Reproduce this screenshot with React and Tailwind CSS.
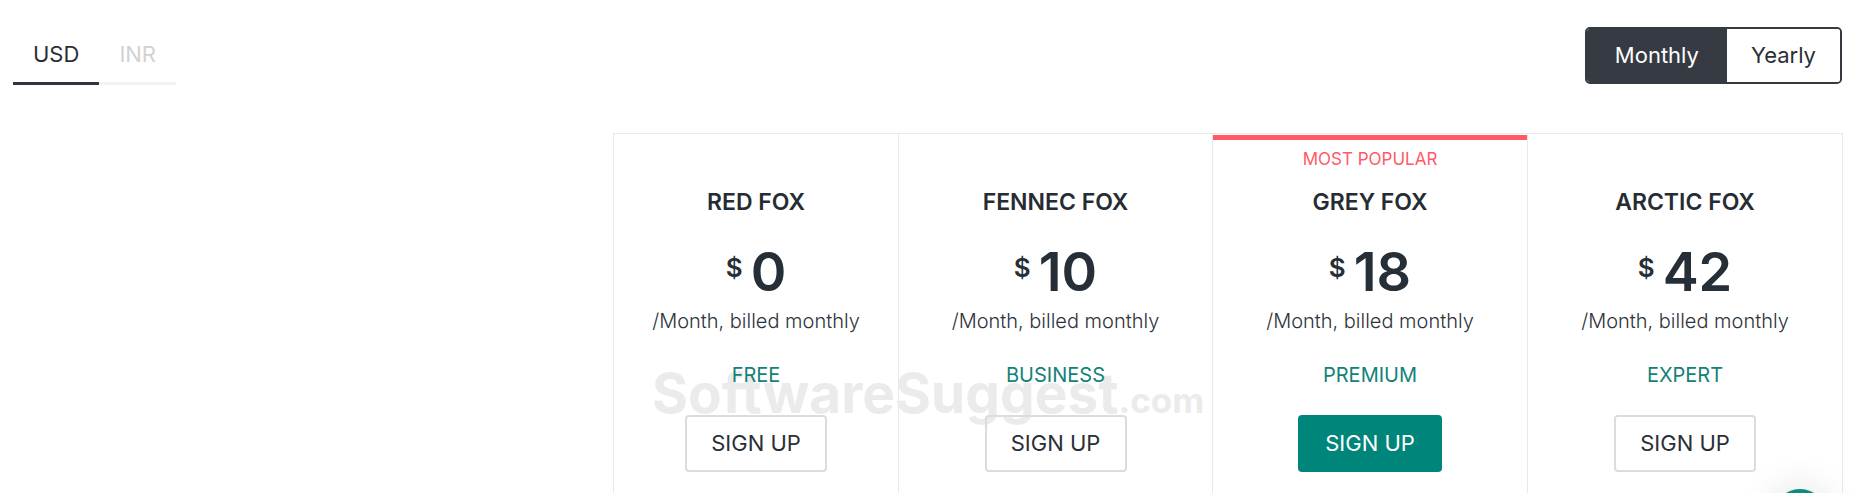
const plans = [
  { name: "RED FOX", price: "0", tier: "FREE", width: "w-[285px]" },
  { name: "FENNEC FOX", price: "10", tier: "BUSINESS", width: "w-[314px]" },
  { name: "GREY FOX", price: "18", tier: "PREMIUM", width: "w-[315px]", popular: true },
  { name: "ARCTIC FOX", price: "42", tier: "EXPERT", width: "w-[316px]", last: true },
];

function PlanCard({ plan }) {
  return (
    <div
      className={`${plan.width} shrink-0 border-t border-l border-[#e8e8ee] ${
        plan.last ? "border-r" : ""
      } flex flex-col items-center pb-10`}
    >
      {/* top accent */}
      <div className={`w-full h-[5px] mt-[1px] ${plan.popular ? "bg-[#ff5a66]" : ""}`} />

      <div className="mt-[7px] h-[24px] text-[17px] leading-[24px] text-[#ff5a66]">
        {plan.popular ? "MOST POPULAR" : ""}
      </div>

      <h3 className="mt-[16px] text-[23px] leading-[30px] font-semibold text-[#262c33]">
        {plan.name}
      </h3>

      <div className="mt-[27px] flex items-start text-[#262f37]">
        <span className="mt-[11px] mr-[8px] text-[26px] leading-[26px] font-semibold">$</span>
        <span className="text-[54px] leading-[56px] font-semibold">{plan.price}</span>
      </div>

      <p className="mt-[8px] text-[20px] leading-[26px] font-light text-[#2d333a]">
        /Month, billed monthly
      </p>

      <p className="mt-[28px] text-[20px] leading-[26px] text-[#138278]">{plan.tier}</p>

      {plan.popular ? (
        <button className="mt-[27px] w-[144px] h-[57px] rounded-[4px] bg-[#00857a] text-white text-[22px]">
          SIGN UP
        </button>
      ) : (
        <button className="mt-[27px] w-[142px] h-[57px] rounded-[4px] border-2 border-[#dcdcdc] bg-transparent text-[#2a2f36] text-[22px]">
          SIGN UP
        </button>
      )}
    </div>
  );
}

export default function App() {
  return (
    <div className="relative min-h-screen bg-white font-['Inter',sans-serif] overflow-hidden">
      {/* watermark */}
      <div className="absolute left-[652px] top-[366px] flex items-baseline text-[#ebebeb] font-bold pointer-events-none select-none">
        <span className="text-[55px] leading-none">SoftwareSuggest</span>
        <span className="text-[35px] leading-none">.com</span>
      </div>

      <div className="relative px-[13px] pt-[27px]">
        {/* currency tabs + billing toggle */}
        <div className="flex items-start justify-between">
          <div className="flex pt-[13px]">
            <button className="px-5 pb-[14px] border-b-[3px] border-[#31363d] text-[22px] leading-[28px] text-[#2b2f36]">
              USD
            </button>
            <button className="px-5 pb-[14px] border-b-[3px] border-[#f2f2f2] text-[22px] leading-[28px] text-[#d2d2d2]">
              INR
            </button>
          </div>

          <div className="flex border-2 border-[#343a40] rounded-[5px] overflow-hidden">
            <button className="h-[53px] px-[28px] bg-[#363a42] text-white text-[22px]">Monthly</button>
            <button className="h-[53px] px-[24px] bg-white text-[#2a2f36] text-[22px]">Yearly</button>
          </div>
        </div>

        {/* plans */}
        <div className="mt-[48px] flex">
          <div className="w-[600px] shrink-0" />
          {plans.map((p) => (
            <PlanCard key={p.name} plan={p} />
          ))}
        </div>
      </div>

      {/* chat bubble */}
      <div className="fixed right-[27px] bottom-[-52px] w-[56px] h-[56px] rounded-full bg-[#0f8a7e] shadow-[0_0_30px_12px_rgba(0,0,0,0.06)]" />
    </div>
  );
}
